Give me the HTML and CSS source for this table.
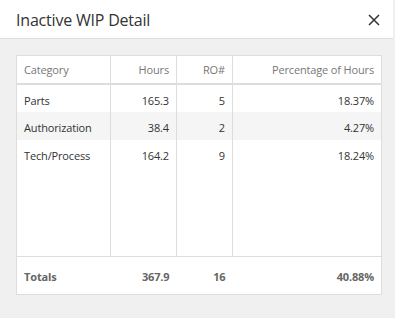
FILE: index.html
```html
<!DOCTYPE html>
<html lang="en">
<head>
	<meta charset="utf-8">
	<meta name="viewport" content="width=device-width, initial-scale=1">
	<title>Inactive WIP Detail</title>
	<link rel="stylesheet" href="styles.css">
</head>
<body>
	<div class="modal">
		<div class="modal-head">
			<h3>Inactive WIP Detail</h3>
			<a class="close" href="#" title="Close">
				<svg width="12" height="12" viewBox="0 0 12 12"><path d="M1 1L11 11M11 1L1 11" stroke="#333" stroke-width="1.5" fill="none"/></svg>
			</a>
		</div>
		<div class="modal-body">
			<table class="grid">
				<colgroup>
					<col class="c-cat"><col class="c-hrs"><col class="c-ro"><col class="c-pct">
				</colgroup>
				<thead>
					<tr><th class="l">Category</th><th>Hours</th><th>RO#</th><th>Percentage of Hours</th></tr>
				</thead>
				<tbody>
					<tr><td class="l">Parts</td><td>165.3</td><td>5</td><td>18.37%</td></tr>
					<tr class="alt"><td class="l">Authorization</td><td>38.4</td><td>2</td><td>4.27%</td></tr>
					<tr><td class="l">Tech/Process</td><td>164.2</td><td>9</td><td>18.24%</td></tr>
					<tr class="filler"><td></td><td></td><td></td><td></td></tr>
				</tbody>
				<tfoot>
					<tr><td class="l">Totals</td><td>367.9</td><td>16</td><td>40.88%</td></tr>
				</tfoot>
			</table>
		</div>
	</div>
</body>
</html>
```
FILE: styles.css
```css
html,body{margin:0;padding:0;height:100%;}
body{font-family:"Open Sans","Noto Sans",sans-serif;color:#333;background:#f0f0f0;}

.modal{width:393px;height:318px;display:flex;flex-direction:column;background:#f0f0f0;}
.modal-head{height:39px;box-sizing:border-box;background:#fff;border-bottom:1px solid #ddd;display:flex;align-items:center;justify-content:space-between;padding:1px 12px 0 16px;}
.modal-head h3{margin:0;font-size:16px;font-weight:normal;color:#333;letter-spacing:-.2px;}
.close{display:flex;width:14px;height:14px;align-items:center;justify-content:center;}
.modal-body{padding:16px 11px 0 16px;}

.grid{width:366px;border-collapse:collapse;background:#fff;border:1px solid #ddd;font-size:11px;letter-spacing:-.15px;table-layout:fixed;}
.c-cat{width:94px;}
.c-hrs{width:66px;}
.c-ro{width:56px;}
.grid th,.grid td{padding:0 7px;text-align:right;white-space:nowrap;}
.grid .l{text-align:left;}
.grid th{height:27px;font-weight:normal;color:#777;border-left:1px solid #ddd;border-bottom:2px solid #ddd;}
.grid tbody td{height:28px;border-left:1px solid #ddd;padding-top:3px;box-sizing:border-box;}
.grid tbody tr.alt{background:#f5f5f5;}
.grid tbody tr.filler td{height:88px;}
.grid tfoot td{height:38px;padding-top:3px;box-sizing:border-box;border-top:1px solid #ddd;font-weight:bold;color:#666;}
```
